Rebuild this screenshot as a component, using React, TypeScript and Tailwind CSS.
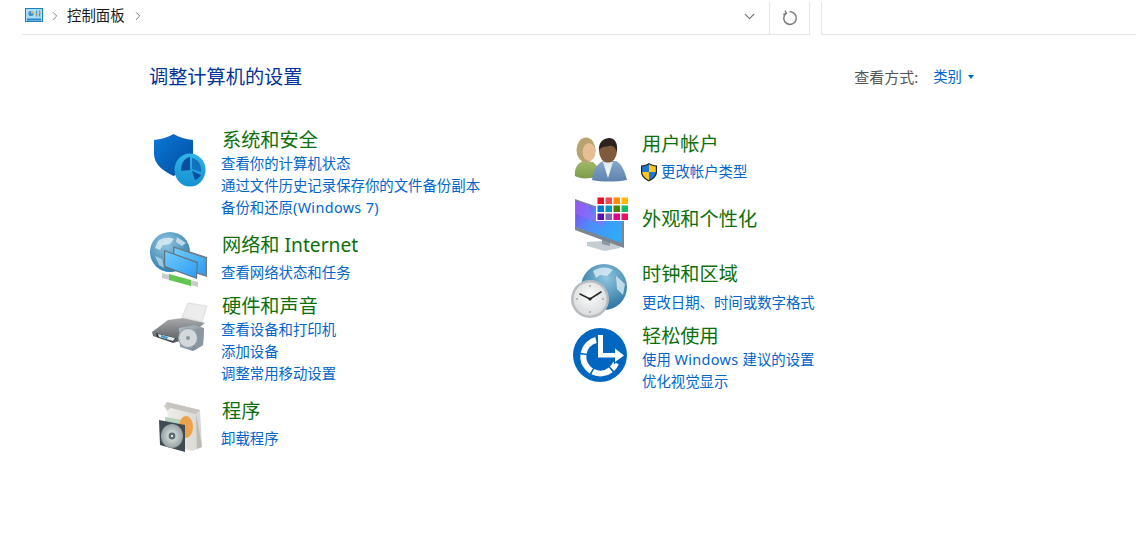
import { ChevronDown, ChevronRight } from "lucide-react";
import type { ReactNode } from "react";

const ShieldIcon = () => (
  <svg width="56" height="56" viewBox="0 0 56 56" className="overflow-visible">
    <defs>
      <linearGradient id="sh" x1="0" y1="0" x2="1" y2="1">
        <stop offset="0" stopColor="#0b78d8" />
        <stop offset="1" stopColor="#004c9e" />
      </linearGradient>
      <linearGradient id="shc" x1="0" y1="0" x2="0" y2="1">
        <stop offset="0" stopColor="#2fb4e8" />
        <stop offset="1" stopColor="#1590d0" />
      </linearGradient>
    </defs>
    <path d="M22.5 2C17 5 10 7.5 3 8L3 22C3 32 12 39 22.5 44C32 39 42 32 42 22L42 8C35 7.5 28 5 22.5 2Z" fill="url(#sh)" />
    <ellipse cx="39" cy="38" rx="15.5" ry="16.5" fill="url(#shc)" />
    <path d="M39 25L39 38L30 39C30 32 33 26 39 25Z" fill="#0a4d9f" />
    <path d="M41 26C47 27 51 33 50 40L41 37Z" fill="#1273bd" />
    <path d="M41 39L50 43C48 46 46 47 44 48Z" fill="#0a4d9f" />
  </svg>
);

const NetworkIcon = () => (
  <svg width="56" height="56" viewBox="0 0 56 56" className="overflow-visible">
    <defs>
      <radialGradient id="nw" cx="0.4" cy="0.3" r="0.8">
        <stop offset="0" stopColor="#94c6df" />
        <stop offset="1" stopColor="#1f76aa" />
      </radialGradient>
      <linearGradient id="ns" x1="0" y1="0" x2="1" y2="1">
        <stop offset="0" stopColor="#6fcbff" />
        <stop offset="1" stopColor="#2f9cf0" />
      </linearGradient>
    </defs>
    <circle cx="20" cy="21" r="20" fill="url(#nw)" />
    <path d="M8 10C13 6 20 6 24 8L20 13L13 14L10 19L5 17Z" fill="#e6f2f8" opacity="0.75" />
    <path d="M27 6L36 12L32 15L26 11Z" fill="#e6f2f8" opacity="0.7" />
    <path d="M5 25L12 28L14 37L9 34Z" fill="#d8eaf3" opacity="0.6" />
    <path d="M12 42L20 44L20 49L12 47Z" fill="#c8cccc" />
    <path d="M40 49L48 51L48 56L40 54Z" fill="#c8cccc" />
    <path d="M19 43L41 49L41 55L19 49Z" fill="#63c552" />
    <path d="M23 15L57 26L57 46L23 35Z" fill="#6e7b84" />
    <path d="M24.5 17L55.5 27.5L55.5 44L24.5 33.5Z" fill="url(#ns)" />
    <path d="M14 19L48 31L47 48L14 36Z" fill="#64727b" />
    <path d="M15.2 20.6L46.8 32L46 46.4L15.2 35Z" fill="url(#ns)" />
  </svg>
);

const PrinterIcon = () => (
  <svg width="56" height="56" viewBox="0 0 56 56" className="overflow-visible">
    <defs>
      <linearGradient id="pb" x1="0" y1="0" x2="0" y2="1">
        <stop offset="0" stopColor="#a8aaac" />
        <stop offset="1" stopColor="#56595c" />
      </linearGradient>
      <linearGradient id="ps" x1="0" y1="0" x2="1" y2="1">
        <stop offset="0" stopColor="#b4bfc7" />
        <stop offset="1" stopColor="#74818c" />
      </linearGradient>
    </defs>
    <path d="M31 16L37 2L56 5L51 21Z" fill="#ececec" stroke="#cfcfcf" strokeWidth="0.6" />
    <path d="M1 31L17 19L32 17L54 22L32 39L22 42L2 35Z" fill="url(#pb)" />
    <path d="M5 32L25 37L22 41L6 36Z" fill="#33383b" />
    <path d="M7 33L24 37L22 40L8 36Z" fill="#dfe9ef" />
    <path d="M10 34L17 36L16 38L10 36Z" fill="#3d9ad6" />
    <path d="M28 27L44 24L53 27L52 44L42 50L29 46Z" fill="url(#ps)" />
    <path d="M44 28L53 27L52 44L44 49Z" fill="#8a96a0" />
    <circle cx="37" cy="37" r="9.5" fill="#d2d8dc" stroke="#8f9aa3" strokeWidth="1" />
    <circle cx="37" cy="37" r="2" fill="#8a959e" />
  </svg>
);

const ProgramIcon = () => (
  <svg width="56" height="56" viewBox="0 0 56 56" className="overflow-visible">
    <defs>
      <linearGradient id="pg" x1="0" y1="0" x2="1" y2="0">
        <stop offset="0" stopColor="#efeeea" />
        <stop offset="1" stopColor="#d8d6d0" />
      </linearGradient>
      <radialGradient id="cd" cx="0.5" cy="0.5" r="0.55">
        <stop offset="0" stopColor="#e6ecec" />
        <stop offset="1" stopColor="#8f9a9a" />
      </radialGradient>
    </defs>
    <path d="M15 3L48 11L50 48L40 52L16 46Z" fill="url(#pg)" />
    <path d="M15 3L12 7L15 12L21 7Z" fill="#cfcdc6" />
    <path d="M15 3L48 11L43 15L15 8Z" fill="#c6c4bd" />
    <path d="M44 14L50 48L45 50Z" fill="#a9a7a0" opacity="0.6" />
    <path d="M13 18L36 22L36 34L13 30Z" fill="#b7d2bd" />
    <ellipse cx="34" cy="28" rx="7" ry="11" fill="#eda24a" />
    <path d="M7 21L33 26L33 53L8 46Z" fill="#3f4a52" />
    <ellipse cx="20" cy="37" rx="11" ry="12" fill="url(#cd)" />
    <circle cx="20" cy="37" r="3.4" fill="#5b666d" />
    <circle cx="20" cy="37" r="1.2" fill="#dfe4e4" />
  </svg>
);

const UsersIcon = () => (
  <svg width="56" height="56" viewBox="0 0 56 56" className="overflow-visible">
    <defs>
      <linearGradient id="ug" x1="0" y1="0" x2="0" y2="1">
        <stop offset="0" stopColor="#a3ba68" />
        <stop offset="1" stopColor="#7c9c4c" />
      </linearGradient>
      <linearGradient id="ub" x1="0" y1="0" x2="0" y2="1">
        <stop offset="0" stopColor="#87a7cb" />
        <stop offset="1" stopColor="#5e83ad" />
      </linearGradient>
      <linearGradient id="us" x1="0" y1="0" x2="0" y2="1">
        <stop offset="0" stopColor="#dfe7ee" />
        <stop offset="1" stopColor="#ffffff" />
      </linearGradient>
    </defs>
    <path d="M3 45C2 37 6 32 11 30L21 31L28 38L24 46C16 48 8 48 3 45Z" fill="url(#ug)" />
    <ellipse cx="14" cy="19" rx="9.5" ry="12.5" fill="#b9a26e" />
    <ellipse cx="17" cy="21" rx="6.5" ry="9" fill="#e6bd95" />
    <path d="M20 49C21 39 25 33 31 30L44 30C50 33 53 41 55 49C43 51 30 51 20 49Z" fill="url(#ub)" />
    <path d="M31 31L41 31L36 47Z" fill="url(#us)" />
    <ellipse cx="36" cy="20" rx="9" ry="11.5" fill="#7f5a3c" />
    <path d="M27 20C26 10 33 7 37 7C43 7 46 12 45 21C43 16 41 14 37 15C33 16 29 15 27 20Z" fill="#2d231c" />
  </svg>
);

const palette = [
  "#e81123", "#f04a50", "#ff8c00", "#ffb900",
  "#0078d7", "#0099bc", "#498205", "#10c060",
  "#5c10b0", "#8764b8", "#e3008c", "#e81060",
];

const AppearanceIcon = () => (
  <svg width="56" height="56" viewBox="0 0 56 56" className="overflow-visible">
    <defs>
      <linearGradient id="as" x1="0" y1="0" x2="1" y2="0.6">
        <stop offset="0" stopColor="#8a3cf0" />
        <stop offset="0.45" stopColor="#4f8bfa" />
        <stop offset="1" stopColor="#30aaf8" />
      </linearGradient>
    </defs>
    <path d="M14 46L29 45L47 49L47 52L32 55L14 50Z" fill="#c4cdd3" />
    <path d="M29 42L37 44L37 50L29 48Z" fill="#8e989f" />
    <path d="M2 3L51 20L51 52L2 34Z" fill="#7a8791" />
    <path d="M3 5L49 21L49 47L3 31Z" fill="url(#as)" />
    <path d="M3 5L16 9L18 17L30 20L30 30L3 18Z" fill="#a067fa" opacity="0.55" />
    <rect x="23" y="0" width="33" height="25" fill="#fff" />
    {palette.map((c, i) => (
      <rect key={i} x={24.5 + (i % 4) * 8} y={1.5 + Math.floor(i / 4) * 8} width="6.5" height="6.5" fill={c} />
    ))}
  </svg>
);

const ClockIcon = () => (
  <svg width="56" height="56" viewBox="0 0 56 56" className="overflow-visible">
    <defs>
      <radialGradient id="cg" cx="0.55" cy="0.3" r="0.8">
        <stop offset="0" stopColor="#8fc6e2" />
        <stop offset="1" stopColor="#1a6796" />
      </radialGradient>
      <radialGradient id="cf" cx="0.5" cy="0.4" r="0.7">
        <stop offset="0" stopColor="#fbfbfb" />
        <stop offset="1" stopColor="#d4d6d8" />
      </radialGradient>
    </defs>
    <circle cx="33" cy="23" r="23" fill="url(#cg)" />
    <path d="M22 7C28 3 36 2 42 6L36 12L29 11L25 14Z" fill="#e3f0f6" opacity="0.75" />
    <path d="M45 12L54 20L52 31L46 25Z" fill="#e3f0f6" opacity="0.75" />
    <circle cx="19" cy="35" r="19" fill="#b7bcc0" />
    <circle cx="19" cy="35" r="16.5" fill="url(#cf)" />
    <g fill="#777">
      <circle cx="19" cy="22" r="0.8" />
      <circle cx="19" cy="48" r="0.8" />
      <circle cx="6" cy="35" r="0.8" />
      <circle cx="32" cy="35" r="0.8" />
    </g>
    <path d="M19 35L9 30M19 35L30 28" stroke="#2b2b2b" strokeWidth="1.5" strokeLinecap="round" />
    <circle cx="19" cy="35" r="1.6" fill="#222" />
  </svg>
);

const EaseIcon = () => (
  <svg width="56" height="56" viewBox="0 0 56 56" className="overflow-visible">
    <circle cx="28" cy="28" r="27" fill="#0067c0" />
    <path
      d="M24 13A17 17 0 1 0 44 36"
      fill="none"
      stroke="#fff"
      strokeWidth="6"
      strokeDasharray="19 1.5"
    />
    <path
      d="M26 8H31V26H43V21.5L52 28.5L43 35V30.5H26Z"
      fill="#fff"
      stroke="#0067c0"
      strokeWidth="2.5"
      paintOrder="stroke"
    />
  </svg>
);

const UacShield = () => (
  <svg width="18" height="20" viewBox="0 0 18 20" className="shrink-0">
    <path d="M9 1C7 2.5 4 3.5 1 3.5L1 10C1 14 4 17 9 19.5C14 17 17 14 17 10L17 3.5C14 3.5 11 2.5 9 1Z" fill="#20262c" />
    <path d="M9 2.3C7 3.6 4.5 4.4 2.2 4.6L2.2 10L9 10Z" fill="#1e78d0" />
    <path d="M9 2.3C11 3.6 13.5 4.4 15.8 4.6L15.8 10L9 10Z" fill="#ffc61c" />
    <path d="M2.2 10L9 10L9 18.2C5 16 2.4 13.6 2.2 10Z" fill="#ffc61c" />
    <path d="M15.8 10L9 10L9 18.2C13 16 15.6 13.6 15.8 10Z" fill="#1e78d0" />
  </svg>
);

const PanelIcon = () => (
  <svg width="18" height="14" viewBox="0 0 18 14">
    <rect x="0.5" y="0.5" width="17" height="13" fill="#a9dcf7" stroke="#1f7fb8" />
    <rect x="2" y="10.5" width="14" height="2" fill="#2a8ac6" />
    <circle cx="6" cy="5.5" r="2.6" fill="#3f8fd0" />
    <path d="M6 5.5V2.9A2.6 2.6 0 0 1 8.6 5.5Z" fill="#f2b63a" />
    <rect x="11" y="2.5" width="1.2" height="6" fill="#4a90c8" />
    <rect x="14" y="2.5" width="1.2" height="6" fill="#4a90c8" />
    <rect x="10.6" y="6" width="2" height="1.2" fill="#e2a32e" />
    <rect x="13.6" y="4" width="2" height="1.2" fill="#e2a32e" />
  </svg>
);

const RefreshIcon = () => (
  <svg width="16" height="16" viewBox="0 0 16 16" fill="none" stroke="#7a7a7a" strokeWidth="1.5">
    <path d="M7.6 1.8A6.3 6.3 0 1 1 3.8 3.4" />
    <path d="M3.2 0.6L4.2 3.6L1.2 4.4" />
  </svg>
);

type Group = {
  title: string;
  icon: ReactNode;
  iconBox: string;
  height: string;
  linkGap: string;
  links: string[];
  uac?: boolean;
};

const leftGroups: Group[] = [
  {
    title: "系统和安全",
    icon: <ShieldIcon />,
    iconBox: "ml-px mt-[5px]",
    height: "h-[105px]",
    linkGap: "mt-px",
    links: ["查看你的计算机状态", "通过文件历史记录保存你的文件备份副本", "备份和还原(Windows 7)"],
  },
  {
    title: "网络和 Internet",
    icon: <NetworkIcon />,
    iconBox: "-mt-px",
    height: "h-[61px]",
    linkGap: "mt-[5px]",
    links: ["查看网络状态和任务"],
  },
  {
    title: "硬件和声音",
    icon: <PrinterIcon />,
    iconBox: "ml-px mt-2",
    height: "h-[105px]",
    linkGap: "mt-px",
    links: ["查看设备和打印机", "添加设备", "调整常用移动设置"],
  },
  {
    title: "程序",
    icon: <ProgramIcon />,
    iconBox: "ml-0.5 mt-px",
    height: "h-[60px]",
    linkGap: "mt-[5px]",
    links: ["卸载程序"],
  },
];

const rightGroups: Group[] = [
  {
    title: "用户帐户",
    icon: <UsersIcon />,
    iconBox: "ml-0.5",
    height: "h-[75px]",
    linkGap: "mt-[5px]",
    links: ["更改帐户类型"],
    uac: true,
  },
  {
    title: "外观和个性化",
    icon: <AppearanceIcon />,
    iconBox: "ml-[3px] -mt-2.5",
    height: "h-[55px]",
    linkGap: "",
    links: [],
  },
  {
    title: "时钟和区域",
    icon: <ClockIcon />,
    iconBox: "ml-px mt-[3px]",
    height: "h-[62px]",
    linkGap: "mt-[6px]",
    links: ["更改日期、时间或数字格式"],
  },
  {
    title: "轻松使用",
    icon: <EaseIcon />,
    iconBox: "ml-0.5 mt-1",
    height: "h-[70px]",
    linkGap: "mt-px",
    links: ["使用 Windows 建议的设置", "优化视觉显示"],
  },
];

// the latin part of a link runs a bit wider than Noto here
const LinkText = ({ text }: { text: string }) => (
  <span>
    {text.split(/(\(?Windows 7?\)?)/).map((part, i) =>
      part.includes("Windows") ? (
        <span key={i} className="tracking-[0.35px]">
          {part}
        </span>
      ) : (
        part
      ),
    )}
  </span>
);

const Category = ({ group, linkOffset }: { group: Group; linkOffset: string }) => (
  <div className={`flex items-start ${group.height}`}>
    <div className="w-[72px] shrink-0">
      <div className={`w-14 h-14 ${group.iconBox}`}>{group.icon}</div>
    </div>
    <div className="pt-px">
      <div className="h-6 text-[19.2px] leading-6 text-[#0b700b]">{group.title}</div>
      <div className={group.linkGap}>
        {group.links.map((link) => (
          <div
            key={link}
            className={`flex items-center h-[22px] text-[14.4px] leading-[22px] text-[#0066cc] whitespace-nowrap ${group.uac ? "-ml-[2px] gap-[3px]" : linkOffset}`}
          >
            {group.uac && <UacShield />}
            <LinkText text={link} />
          </div>
        ))}
      </div>
    </div>
  </div>
);

export default function App() {
  return (
    <div className="h-screen bg-white overflow-hidden font-['Noto_Sans','Noto_Sans_CJK_SC',sans-serif]">
      <header className="flex h-[35px] ml-[22px] mr-3">
        <div className="flex flex-1 items-center pb-0.5 border-b border-[#e5e5e5]">
          <div className="ml-[3px] -mt-0.5">
            <PanelIcon />
          </div>
          <ChevronRight size={14} strokeWidth={1.6} className="ml-[5px] text-[#777]" />
          <span className="ml-[5px] text-[14.4px] text-[#1a1a1a]">控制面板</span>
          <ChevronRight size={14} strokeWidth={1.6} className="ml-[6px] text-[#777]" />
          <ChevronDown size={17} strokeWidth={1.8} className="ml-auto mr-[11px] text-[#777]" />
        </div>
        <div className="flex items-center justify-center w-[41px] mt-0.5 border-x border-b border-[#e5e5e5]">
          <RefreshIcon />
        </div>
        <div className="w-[11px]" />
        <div className="w-[315px] mt-0.5 border-l border-b border-[#e5e5e5]" />
      </header>

      <main className="pl-[150px]">
        <div className="flex items-center justify-between w-[824px] h-6 mt-[30px]">
          <h1 className="-ml-px text-[19.2px] leading-6 text-[#003399]">调整计算机的设置</h1>
          <div className="flex items-center text-[14.4px]">
            <span className="text-[15px] text-[#555]">查看方式:</span>
            <span className="ml-[15px] text-[#0066cc]">类别</span>
            <span className="ml-[6px] border-x-[3.5px] border-t-[4px] border-x-transparent border-t-[#0066cc]" />
          </div>
        </div>

        <div className="flex mt-[38px]">
          <div className="w-[420px]">
            {leftGroups.map((g) => (
              <Category key={g.title} group={g} linkOffset="-ml-px" />
            ))}
          </div>
          <div className="pt-1">
            {rightGroups.map((g) => (
              <Category key={g.title} group={g} linkOffset="" />
            ))}
          </div>
        </div>
      </main>
    </div>
  );
}
